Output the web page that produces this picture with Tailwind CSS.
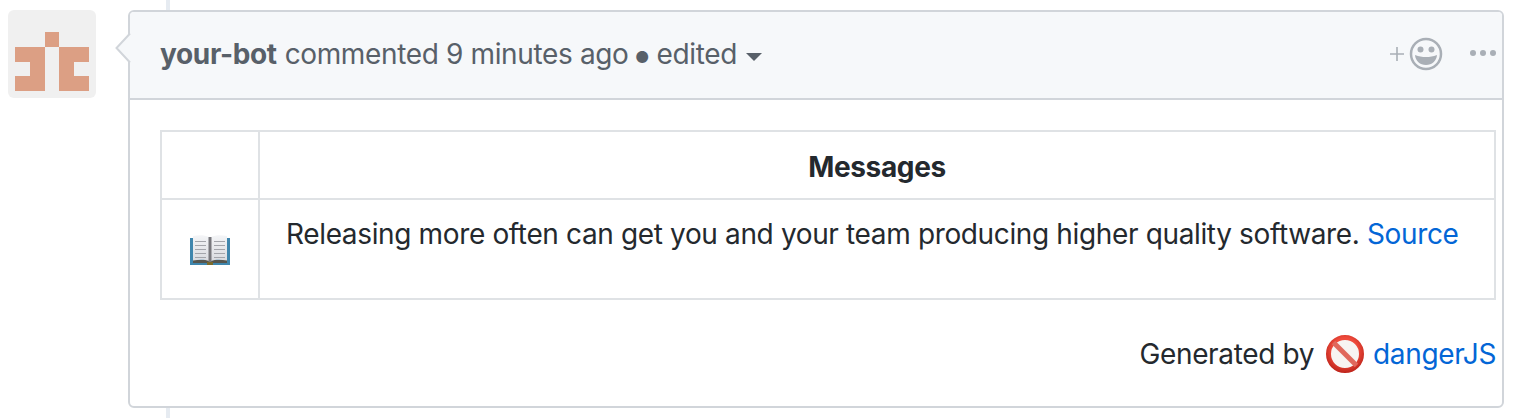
<!DOCTYPE html>
<html lang="en">
<head>
    <meta charset="UTF-8">
    <title>your-bot comment</title>
    <script src="https://cdn.jsdelivr.net/npm/@tailwindcss/browser@4"></script>
</head>
<body class="bg-white font-['Inter',sans-serif] text-[28px] leading-[40px] tracking-[-0.36px] text-[#24292e] overflow-hidden">
    <div class="relative flex items-start gap-8 pl-2 pt-[10px] w-[1538px] h-[418px]">
        <!-- timeline line -->
        <div class="absolute left-[166px] top-0 w-[4px] h-[418px] bg-[#e6ebf1]"></div>

        <!-- avatar -->
        <div class="w-[88px] h-[88px] shrink-0 rounded-[6px] bg-[#f0f0f0] overflow-hidden">
            <svg width="88" height="88" viewBox="8 10 88 88">
                <path fill="#dc9f84" d="M45 32h14v15H45zM15 47h30v44H15V76h15V62H15zM59 47h30v15H74v14h15v15H59z"/>
            </svg>
        </div>

        <!-- comment box -->
        <div class="relative w-[1376px] h-[398px] shrink-0 rounded-[6px] border-2 border-[#d1d5da] bg-white">
            <svg class="absolute left-[-15px] top-[20px]" width="17" height="32" viewBox="0 0 17 32">
                <path d="M15 1.500 1.500 16 15 30.500" fill="#f6f8fa" stroke="#d1d5da" stroke-width="2"/>
                <path d="M15 3v26h2V3z" fill="#f6f8fa"/>
            </svg>

            <div class="flex items-center justify-between h-[88px] pl-[30px] pr-[6px] bg-[#f6f8fa] border-b-2 border-[#d1d5da] rounded-t-[4px] text-[#586069]">
                <div class="flex items-center -mt-[2px]">
                    <span class="font-bold">your-bot</span>
                    <span class="ml-[8px]">commented 9 minutes ago</span>
                    <span class="ml-[3px] mr-[4px] text-[38px] leading-none">•</span>
                    <span>edited</span>
                    <svg class="ml-[9px] mt-[6px]" width="16" height="8" viewBox="0 0 16 8"><path fill="#586069" d="M0 0h16L8 8z"/></svg>
                </div>
                <div class="flex items-center -mt-[2px]">
                    <svg width="14" height="14" viewBox="0 0 14 14"><path fill="none" stroke="#a9afb6" stroke-width="1.600" d="M7 0v14M0 7h14"/></svg>
                    <svg class="ml-[5px]" width="34" height="34" viewBox="0 0 34 34">
                        <circle cx="17" cy="17" r="15" fill="none" stroke="#a9afb6" stroke-width="2.500"/>
                        <circle cx="11.500" cy="12.500" r="3" fill="#a9afb6"/>
                        <circle cx="22.500" cy="12.500" r="3" fill="#a9afb6"/>
                        <path fill="#a9afb6" d="M6 18c4 1.500 7 2 11 2s7-.5 11-2c-.5 6-5 10-11 10S6.500 24 6 18z"/>
                    </svg>
                    <div class="flex gap-[4px] ml-[27px] mb-[2px]">
                        <span class="w-[6px] h-[6px] rounded-full bg-[#a9afb6]"></span>
                        <span class="w-[6px] h-[6px] rounded-full bg-[#a9afb6]"></span>
                        <span class="w-[6px] h-[6px] rounded-full bg-[#a9afb6]"></span>
                    </div>
                </div>
            </div>

            <div class="pl-[30px] pr-[6px] pt-[30px]">
                <table class="w-[1336px] border-collapse table-fixed">
                    <thead>
                        <tr class="h-[68px]">
                            <th class="w-[98px] border-2 border-[#dfe2e5]"></th>
                            <th class="border-2 border-[#dfe2e5] font-bold text-center pt-[3px]">Messages</th>
                        </tr>
                    </thead>
                    <tbody>
                        <tr class="h-[100px]">
                            <td class="border-2 border-[#dfe2e5] text-center">
                                <svg class="inline-block -mt-[3px]" width="40" height="32" viewBox="0 0 40 32">
                                    <defs>
                                        <linearGradient id="page" x1="0" y1="0" x2="0" y2="1">
                                            <stop offset="0" stop-color="#f4f5f7"/>
                                            <stop offset="1" stop-color="#d9dbe0"/>
                                        </linearGradient>
                                    </defs>
                                    <path fill="#3f86ad" d="M0 4h40v27H0z"/>
                                    <path fill="#56564f" d="M3 26h34v3H3z"/>
                                    <path fill="url(#page)" d="M3 2c6-1.500 12-1 16 1v24c-4-1.500-10-1.500-16-.5z"/>
                                    <path fill="url(#page)" d="M21 3c4-2 10-2.500 16-1v24.500c-6-1-12-1-16 .5z"/>
                                    <path fill="#77777c" d="M18.500 3h3v25h-3z"/>
                                    <path fill="#a3a5ab" d="M5 7h11v1H5zM5 11h11v1H5zM5 15h11v1H5zM5 19h11v1H5zM5 23h11v1H5zM24 7h11v1H24zM24 11h11v1H24zM24 15h11v1H24zM24 19h11v1H24zM24 23h11v1H24z"/>
                                    <path fill="#7a6a2c" d="M17 28h6v3h-6z"/>
                                </svg>
                            </td>
                            <td class="border-2 border-[#dfe2e5] align-top pl-[26px] pt-[14px]">
                                Releasing more often can get you and your team producing higher quality software. <a href="#" class="text-[#0366d6]">Source</a>
                            </td>
                        </tr>
                    </tbody>
                </table>

                <div class="flex items-center justify-end mt-[34px]">
                    <span>Generated by</span>
                    <svg class="ml-[11px] mr-[8px]" width="40" height="40" viewBox="0 0 40 40">
                        <defs>
                            <radialGradient id="ban" cx="0.500" cy="0.400" r="0.650">
                                <stop offset="0.600" stop-color="#ef4b3c"/>
                                <stop offset="1" stop-color="#c1271d"/>
                            </radialGradient>
                        </defs>
                        <circle cx="20" cy="20" r="16.500" fill="#f7f4f2" stroke="url(#ban)" stroke-width="5"/>
                        <path d="M8.500 8.500l23 23" stroke="#e0685c" stroke-width="5"/>
                    </svg>
                    <a href="#" class="text-[#0366d6]">dangerJS</a>
                </div>
            </div>
        </div>
    </div>
</body>
</html>
